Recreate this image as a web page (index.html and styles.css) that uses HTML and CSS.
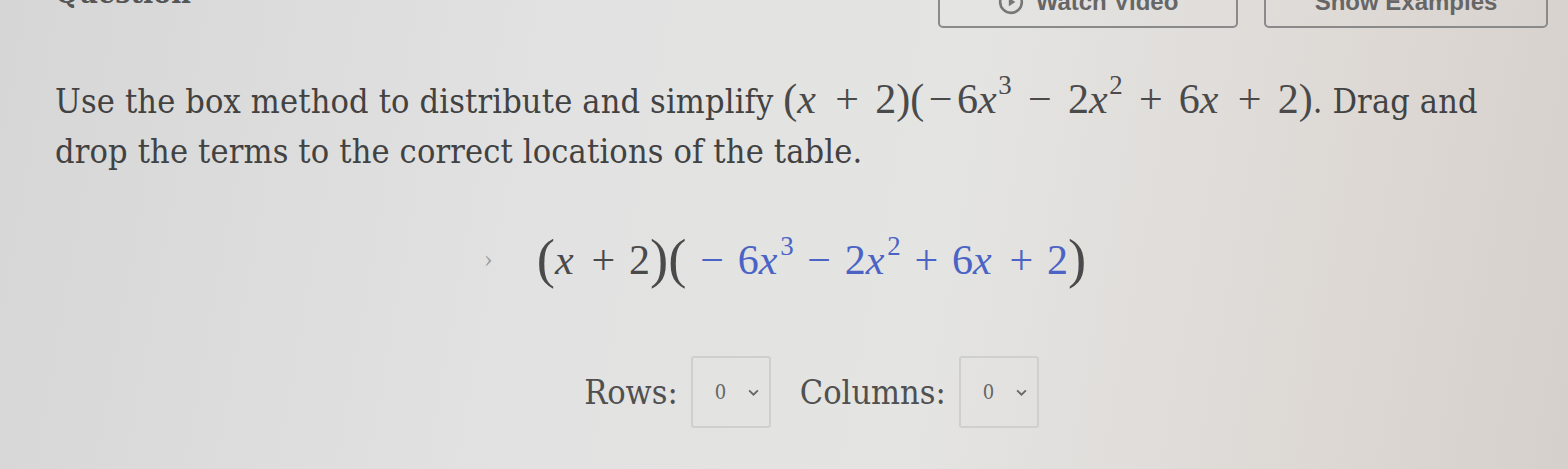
FILE: index.html
```html
<!DOCTYPE html>
<html>
<head>
<meta charset="utf-8">
<link rel="stylesheet" href="styles.css">
</head>
<body>
<div class="page">
  <header class="top">
    <h2 class="title">Question</h2>
    <div class="actions">
      <button class="btn video"><svg class="play" viewBox="0 0 24 24" width="26" height="26"><circle cx="12" cy="12" r="10" fill="none" stroke="#777" stroke-width="2.4"/><path d="M10 8l6 4-6 4z" fill="#777"/></svg>Watch Video</button>
      <button class="btn examples">Show Examples</button>
    </div>
  </header>
  <p class="prompt">Use the box method to distribute and simplify <span class="math">(<i>x</i><span class="op">+</span>2)(<span class="un">−</span>6<i>x</i><sup>3</sup><span class="op">−</span>2<i>x</i><sup>2</sup><span class="op">+</span>6<i>x</i><span class="op">+</span>2)</span>. Drag and drop the terms to the correct locations of the table.</p>
  <div class="display">
    <span class="caret">›</span>
    <span class="math big"><span class="paren">(</span><i>x</i><span class="op">+</span>2<span class="paren">)(</span><span class="blue"><span class="op">−</span>6<i>x</i><sup>3</sup><span class="op">−</span>2<i>x</i><sup>2</sup><span class="op">+</span>6<i>x</i><span class="op">+</span>2</span><span class="paren">)</span></span>
    <span></span>
  </div>
  <div class="dims">
    <label class="lbl">Rows:</label>
    <div class="sel"><span>0</span><svg viewBox="0 0 10 6" width="11" height="7"><path d="M1 1l4 4 4-4" fill="none" stroke="#666" stroke-width="1.6"/></svg></div>
    <label class="lbl cols">Columns:</label>
    <div class="sel"><span>0</span><svg viewBox="0 0 10 6" width="11" height="7"><path d="M1 1l4 4 4-4" fill="none" stroke="#666" stroke-width="1.6"/></svg></div>
  </div>
</div>
</body>
</html>
```

FILE: styles.css
```css
html, body {
  margin: 0;
  height: 100%;
}
body {
  background: linear-gradient(100deg, #d6d6d6 0%, #e2e2e2 35%, #e4e4e2 60%, #ddd8d4 85%, #d6d0cc 100%);
  font-family: "DejaVu Serif", Georgia, serif;
  font-stretch: condensed;
  color: #424242;
  overflow: hidden;
}
.page {
  width: 1568px;
  height: 469px;
  box-sizing: border-box;
  padding: 0 0 0 55px;
}
.top {
  display: flex;
  justify-content: space-between;
  align-items: flex-start;
  height: 30px;
  padding-right: 20px;
}
.title {
  margin: -24px 0 0 0;
  font-size: 30px;
  font-weight: bold;
  color: #555;
  line-height: 34px;
}
.actions {
  display: flex;
  gap: 26px;
  margin-top: -24px;
}
.btn {
  height: 52px;
  border: 2px solid #8a8a8a;
  border-radius: 5px;
  background: transparent;
  font-family: "Liberation Sans", Arial, sans-serif;
  font-size: 24px;
  font-weight: bold;
  color: #666;
  display: flex;
  align-items: center;
  justify-content: center;
  gap: 12px;
  padding: 0;
}
.video { width: 300px; }
.examples { width: 284px; }
.prompt {
  margin: 44px 0 0 0;
  width: 1440px;
  font-size: 34px;
  line-height: 50px;
  letter-spacing: 0.15px;
}
.math {
  font-family: "Liberation Serif", "Times New Roman", serif;
  font-stretch: normal;
  font-size: 42px;
  letter-spacing: 0;
  color: #4a4a4a;
}
.math i {
  font-style: italic;
  padding-right: 0.1em;
}
.op {
  display: inline-block;
  width: 1.22em;
  text-align: center;
}
.prompt .op { width: 1.34em; }
.prompt .math i { padding-right: 0.07em; }
.un {
  display: inline-block;
  width: 0.78em;
  text-align: center;
}
.math sup {
  font-size: 0.64em;
  line-height: 0;
  vertical-align: 0.72em;
  margin-left: -0.05em;
}
.display {
  display: grid;
  grid-template-columns: 1fr auto 1fr;
  align-items: center;
  column-gap: 44px;
  margin-top: 54px;
}
.caret {
  justify-self: end;
  font-size: 24px;
  color: #999;
}
.big {
  font-size: 42px;
  line-height: 60px;
}
.paren {
  font-size: 1.3em;
  vertical-align: -0.06em;
  line-height: 0;
}
.blue { color: #4a63c4; }
.dims {
  display: flex;
  justify-content: center;
  align-items: center;
  margin-top: 66px;
}
.lbl {
  font-size: 34px;
  color: #505050;
  margin-right: 13px;
}
.cols { margin-left: 29px; }
.sel {
  width: 80px;
  height: 72px;
  box-sizing: border-box;
  border: 2px solid #cfcfcf;
  border-radius: 3px;
  display: flex;
  align-items: center;
  justify-content: space-between;
  padding: 0 10px 0 22px;
  font-size: 20px;
  color: #666;
}
```
